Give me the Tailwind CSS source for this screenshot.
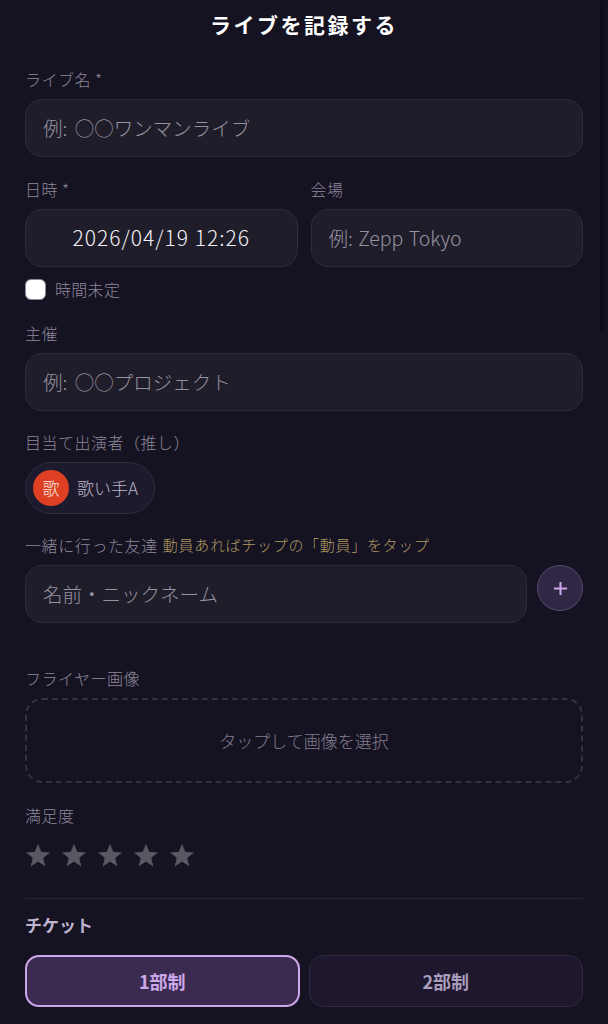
<!DOCTYPE html>
<html lang="ja">
<head>
  <meta charset="UTF-8" />
  <meta name="viewport" content="width=device-width, initial-scale=1" />
  <title>ライブを記録する</title>
  <script src="https://cdn.jsdelivr.net/npm/@tailwindcss/browser@4"></script>
</head>
<body class="relative h-[1024px] overflow-hidden bg-[#151222] font-['Noto_Sans_CJK_JP','Noto_Sans',sans-serif] font-light text-[#8d8799]">

  <!-- Scrollbar -->
  <div class="absolute right-[4px] top-0 h-[333px] w-[4px] rounded-full bg-[#110e1b]"></div>

  <!-- Header -->
  <h1 class="pt-[9px] text-center text-[21px] leading-[30px] font-bold tracking-[2.5px] text-white">ライブを記録する</h1>

  <main class="flex flex-col px-[25px] pt-[29px]">

    <label class="text-[16px] leading-[22px] tracking-[0.5px]">ライブ名 *</label>
    <input placeholder="例: ○○ワンマンライブ" class="mt-[9px] h-[58px] w-full rounded-[17px] border border-[#2e2b3b] bg-[#201d2b] px-[17px] pb-[2px] text-[19.5px] [word-spacing:3px] text-white placeholder:text-[#96929f]" />

    <div class="mt-[21px] grid grid-cols-2 gap-[13px]">
      <div>
        <label class="block text-[16px] leading-[22px] tracking-[0.5px]">日時 *</label>
        <div class="mt-[9px] flex h-[58px] items-center justify-center rounded-[17px] border border-[#2e2b3b] bg-[#201d2b] text-[21px] tracking-[1px] text-[#f2f1f4]">2026/04/19 12:26</div>
      </div>
      <div>
        <label class="block text-[16px] leading-[22px] tracking-[0.5px]">会場</label>
        <input placeholder="例: Zepp Tokyo" class="mt-[9px] h-[58px] w-full rounded-[17px] border border-[#2e2b3b] bg-[#201d2b] px-[17px] pb-[2px] text-[19.5px] [word-spacing:1px] placeholder:text-[#96929f]" />
      </div>
    </div>

    <div class="mt-[11px] flex items-center gap-[9px]">
      <span class="h-[21px] w-[21px] rounded-[6px] border border-[#8d8799] bg-white"></span>
      <span class="text-[16px] leading-[22px] tracking-[0.3px]">時間未定</span>
    </div>

    <label class="mt-[22px] text-[16px] leading-[22px] tracking-[0.5px]">主催</label>
    <input placeholder="例: ○○プロジェクト" class="mt-[9px] h-[58px] w-full rounded-[17px] border border-[#2e2b3b] bg-[#201d2b] px-[17px] pb-[2px] text-[19.5px] [word-spacing:3px] placeholder:text-[#96929f]" />

    <label class="mt-[20px] text-[16px] leading-[22px] tracking-[0.5px]">目当て出演者（推し）</label>
    <div class="mt-[9px] flex h-[52px] w-[130px] items-center gap-[8px] rounded-full border border-[#2e2b3b] bg-[#1e1a2e] pl-[7px]">
      <span class="flex h-[36px] w-[36px] items-center justify-center rounded-full bg-[#df3f22] text-[17px] text-[#f4e4df]">歌</span>
      <span class="text-[17px] text-[#b9b5c2]">歌い手A</span>
    </div>

    <label class="mt-[20px] flex items-center gap-[5px] text-[16px] leading-[22px] tracking-[0.6px]">一緒に行った友達 <span class="text-[15px] tracking-[0.7px] text-[#b09a62]">動員あればチップの「動員」をタップ</span></label>
    <div class="mt-[9px] flex gap-[10px]">
      <input placeholder="名前・ニックネーム" class="h-[58px] min-w-0 flex-1 rounded-[17px] border border-[#2e2b3b] bg-[#201d2b] px-[17px] pb-[2px] text-[19.5px] placeholder:text-[#96929f]" />
      <button class="flex h-[46px] w-[46px] items-center justify-center rounded-full border border-[#5b4d73] bg-[#2f2743]">
        <svg width="15" height="15" viewBox="0 0 16 16" fill="none" stroke="#c9a6ec" stroke-width="2.2"><path d="M8 1v14M1 8h14" /></svg>
      </button>
    </div>

    <label class="mt-[44px] text-[16px] leading-[22px] tracking-[0.5px]">フライヤー画像</label>
    <div class="mt-[9px] flex h-[85px] items-center justify-center rounded-[17px] border-2 border-dashed border-[#35323f] text-[17px] text-[#827c8e]">タップして画像を選択</div>

    <label class="mt-[21px] text-[16px] leading-[22px] tracking-[0.5px]">満足度</label>
    <div class="mt-[16px] flex gap-[10px]">
      <svg width="26" height="26" viewBox="0 0 24 24" fill="#5a5763"><path d="M12 1.5l3 7.6 8.1.5-6.3 5.2 2.1 7.9L12 18.3l-6.9 4.4 2.1-7.9L.9 9.6 9 9.1z" /></svg>
      <svg width="26" height="26" viewBox="0 0 24 24" fill="#5a5763"><path d="M12 1.5l3 7.6 8.1.5-6.3 5.2 2.1 7.9L12 18.3l-6.9 4.4 2.1-7.9L.9 9.6 9 9.1z" /></svg>
      <svg width="26" height="26" viewBox="0 0 24 24" fill="#5a5763"><path d="M12 1.5l3 7.6 8.1.5-6.3 5.2 2.1 7.9L12 18.3l-6.9 4.4 2.1-7.9L.9 9.6 9 9.1z" /></svg>
      <svg width="26" height="26" viewBox="0 0 24 24" fill="#5a5763"><path d="M12 1.5l3 7.6 8.1.5-6.3 5.2 2.1 7.9L12 18.3l-6.9 4.4 2.1-7.9L.9 9.6 9 9.1z" /></svg>
      <svg width="26" height="26" viewBox="0 0 24 24" fill="#5a5763"><path d="M12 1.5l3 7.6 8.1.5-6.3 5.2 2.1 7.9L12 18.3l-6.9 4.4 2.1-7.9L.9 9.6 9 9.1z" /></svg>
    </div>

    <div class="mt-[30px] border-t border-[#272433] pt-[13px]">
      <h2 class="text-[17px] leading-[26px] font-bold text-[#bfb3cf]">チケット</h2>
      <div class="mt-[17px] grid grid-cols-2 gap-[9px]">
        <button class="h-[52px] rounded-[14px] border-2 border-[#cda8ea] bg-[#3c2b50] text-[18px] font-bold text-[#cda8ea]">1部制</button>
        <button class="h-[52px] rounded-[14px] border border-[#2e2940] bg-[#1f172d] text-[18px] font-bold text-[#a99cbc]">2部制</button>
      </div>
    </div>
  </main>
</body>
</html>
